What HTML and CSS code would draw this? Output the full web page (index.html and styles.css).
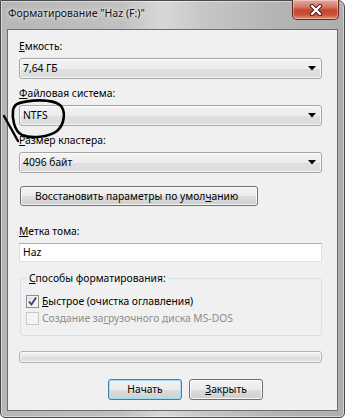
FILE: index.html
```html
<!DOCTYPE html>
<html lang="ru">
<head>
<meta charset="utf-8">
<title>Форматирование</title>
<link rel="stylesheet" href="styles.css">
</head>
<body>
<div class="window">
  <div class="titlebar">
    <span class="title">Форматирование "Haz (F:)"</span>
    <div class="close-btn">
      <svg width="14" height="12" viewBox="0 0 14 12">
        <path d="M3 2 L11 10 M11 2 L3 10" stroke="#4a1a12" stroke-width="4.2" stroke-linecap="round"/>
        <path d="M3 2 L11 10 M11 2 L3 10" stroke="#ffffff" stroke-width="2.4" stroke-linecap="round"/>
      </svg>
    </div>
  </div>
  <div class="client">
    <div class="label first"><u>Е</u>мкость:</div>
    <div class="combo"><span>7,64 ГБ</span><svg class="arrow" width="8" height="5" viewBox="0 0 8 5"><path d="M0 0 H8 L4 4.5 Z" fill="#000"/></svg></div>
    <div class="label"><u>Ф</u>айловая система:</div>
    <div class="combo"><span>NTFS</span><svg class="arrow" width="8" height="5" viewBox="0 0 8 5"><path d="M0 0 H8 L4 4.5 Z" fill="#000"/></svg></div>
    <div class="label"><u>Р</u>азмер кластера:</div>
    <div class="combo"><span>4096 байт</span><svg class="arrow" width="8" height="5" viewBox="0 0 8 5"><path d="M0 0 H8 L4 4.5 Z" fill="#000"/></svg></div>
    <div class="btn restore">Восстановить параметры по умол<u>ч</u>анию</div>
    <div class="label vol"><u>М</u>етка тома:</div>
    <div class="textbox">Haz</div>
    <fieldset class="group">
      <legend><u>С</u>пособы форматирования:</legend>
      <div class="check-row first-row">
        <span class="checkbox">
          <svg width="11" height="11" viewBox="0 0 11 11"><path d="M2 5.5 L4.5 8.5 L9 1.5" stroke="#33456f" stroke-width="1.8" fill="none"/></svg>
        </span>
        <span><u>Б</u>ыстрое (очистка оглавления)</span>
      </div>
      <div class="check-row disabled">
        <span class="checkbox"></span>
        <span>Создание за<u>г</u>рузочного диска MS-DOS</span>
      </div>
    </fieldset>
    <div class="progress"></div>
    <div class="buttons">
      <div class="btn default">Начать</div>
      <div class="btn"><u>З</u>акрыть</div>
    </div>
  </div>
</div>
<svg class="annotation" width="345" height="418" viewBox="0 0 345 418">
  <path d="M17 104 C 30 99, 52 99, 60 105 C 66 110, 65 124, 57 131 C 49 137, 32 139, 22 135 C 14 131, 12 118, 13 110 C 14 106, 16 104, 19 103" stroke="#000" stroke-width="2.6" fill="none" stroke-linecap="round"/>
  <path d="M4 116 L 18 141" stroke="#000" stroke-width="2.4" fill="none" stroke-linecap="round"/>
</svg>
</body>
</html>
```
FILE: styles.css
```css
* { box-sizing: border-box; }
html, body { margin: 0; padding: 0; }
body {
  position: relative;
  width: 345px;
  height: 418px;
  overflow: hidden;
  background: #ffffff;
  font-family: "Noto Sans", "Open Sans", sans-serif;
  font-size: 10.3px;
  color: #000;
}
.window {
  width: 345px;
  height: 418px;
  border: 1px solid #4b4b4b;
  border-radius: 0 7px 5px 5px;
  background: linear-gradient(90deg, #b6b6b6 0%, #c0c0c0 35%, #d8d8d8 47%, #c8c8c8 58%, #b4b4b4 80%, #aeaeae 100%);
  box-shadow: inset 0 0 0 1px rgba(255,255,255,0.45);
  display: flex;
  flex-direction: column;
}
.titlebar {
  height: 28px;
  display: flex;
  justify-content: space-between;
  align-items: flex-start;
  padding-left: 7px;
  padding-right: 5px;
}
.title {
  margin-top: 5px;
  line-height: 15px;
  font-size: 10.5px;
  color: #111;
  text-shadow: 0 0 6px rgba(255,255,255,0.9), 0 0 3px rgba(255,255,255,0.7);
}
.close-btn {
  width: 47px;
  height: 20px;
  margin-top: -1px;
  border: 1px solid #5e2a22;
  border-top: none;
  border-radius: 0 0 5px 5px;
  background: linear-gradient(#e4aa9d 0%, #d77a69 35%, #c4462e 55%, #cf553b 80%, #e8957a 100%);
  box-shadow: inset 0 0 0 1px rgba(255,255,255,0.35);
  display: flex;
  align-items: center;
  justify-content: center;
}
.client {
  margin: 0 6px;
  height: 382px;
  background: #f0f0f0;
  border: 1px solid #6e6e6e;
  padding: 0 15px 0 11px;
  display: flex;
  flex-direction: column;
}
.label { margin-top: 7px; line-height: 15px; }
.label.first { margin-top: 9px; }
.label.vol { margin-top: 18px; }
.combo {
  margin-top: 4px;
  height: 21px;
  border: 1px solid #a6a6a6;
  border-radius: 3px;
  background: linear-gradient(#f4f4f4 0%, #ececec 50%, #e0e0e0 51%, #dcdcdc 100%);
  box-shadow: inset 0 0 0 1px rgba(255,255,255,0.7);
  display: flex;
  align-items: center;
  justify-content: space-between;
  padding: 0 5px 0 3px;
  line-height: 15px;
}
.btn {
  height: 21px;
  border: 1px solid #707070;
  border-radius: 3px;
  background: linear-gradient(#f2f2f2 0%, #ebebeb 50%, #dddddd 51%, #cfcfcf 100%);
  box-shadow: inset 0 0 0 1px rgba(255,255,255,0.8);
  display: flex;
  align-items: center;
  justify-content: center;
  line-height: 15px;
}
.btn.restore {
  margin-top: 13px;
  height: 20px;
  width: 238px;
  margin-left: 1px;
  justify-content: flex-start;
  padding-left: 14px;
}
.textbox {
  margin-top: 4px;
  height: 19px;
  background: #fff;
  border: 1px solid #dbdfe6;
  border-top-color: #abadb3;
  padding-left: 3px;
  line-height: 17px;
}
.group {
  margin: 9px 0 0 1px;
  padding: 0 0 8px 5px;
  border: 1px solid #d5dfe5;
  border-radius: 3px;
  min-width: 0;
}
.group legend {
  padding: 0 2px;
  margin-left: 1px;
  line-height: 15px;
}
.check-row {
  height: 17px;
  line-height: 17px;
  display: flex;
  align-items: center;
  gap: 3px;
}
.check-row.first-row { margin-top: 7px; }
.checkbox {
  width: 13px;
  height: 13px;
  border: 1px solid #8e8f8f;
  background: linear-gradient(135deg, #dcdcdc, #fbfbfb);
  box-shadow: inset 0 0 0 1px #f4f4f4;
  display: flex;
  align-items: center;
  justify-content: center;
}
.check-row.disabled { color: #8d8d8d; }
.check-row.disabled .checkbox {
  border-color: #c8c8c8;
  background: #f4f4f4;
  box-shadow: none;
}
.progress {
  margin-top: 15px;
  height: 12px;
  border: 1px solid #b2b2b2;
  border-radius: 3px;
  background: linear-gradient(#f3f3f3 0%, #e6e6e6 50%, #dadada 51%, #e4e4e4 100%);
  box-shadow: inset 0 0 0 1px rgba(255,255,255,0.6);
}
.buttons {
  margin-top: 16px;
  display: flex;
  gap: 7px;
  padding-left: 89px;
}
.buttons .btn { width: 74px; }
.btn.default {
  border-color: #3c7fb1;
  box-shadow: inset 0 0 0 1px #9fdcf7;
}
.annotation {
  position: absolute;
  left: 0;
  top: 0;
  pointer-events: none;
}
```
